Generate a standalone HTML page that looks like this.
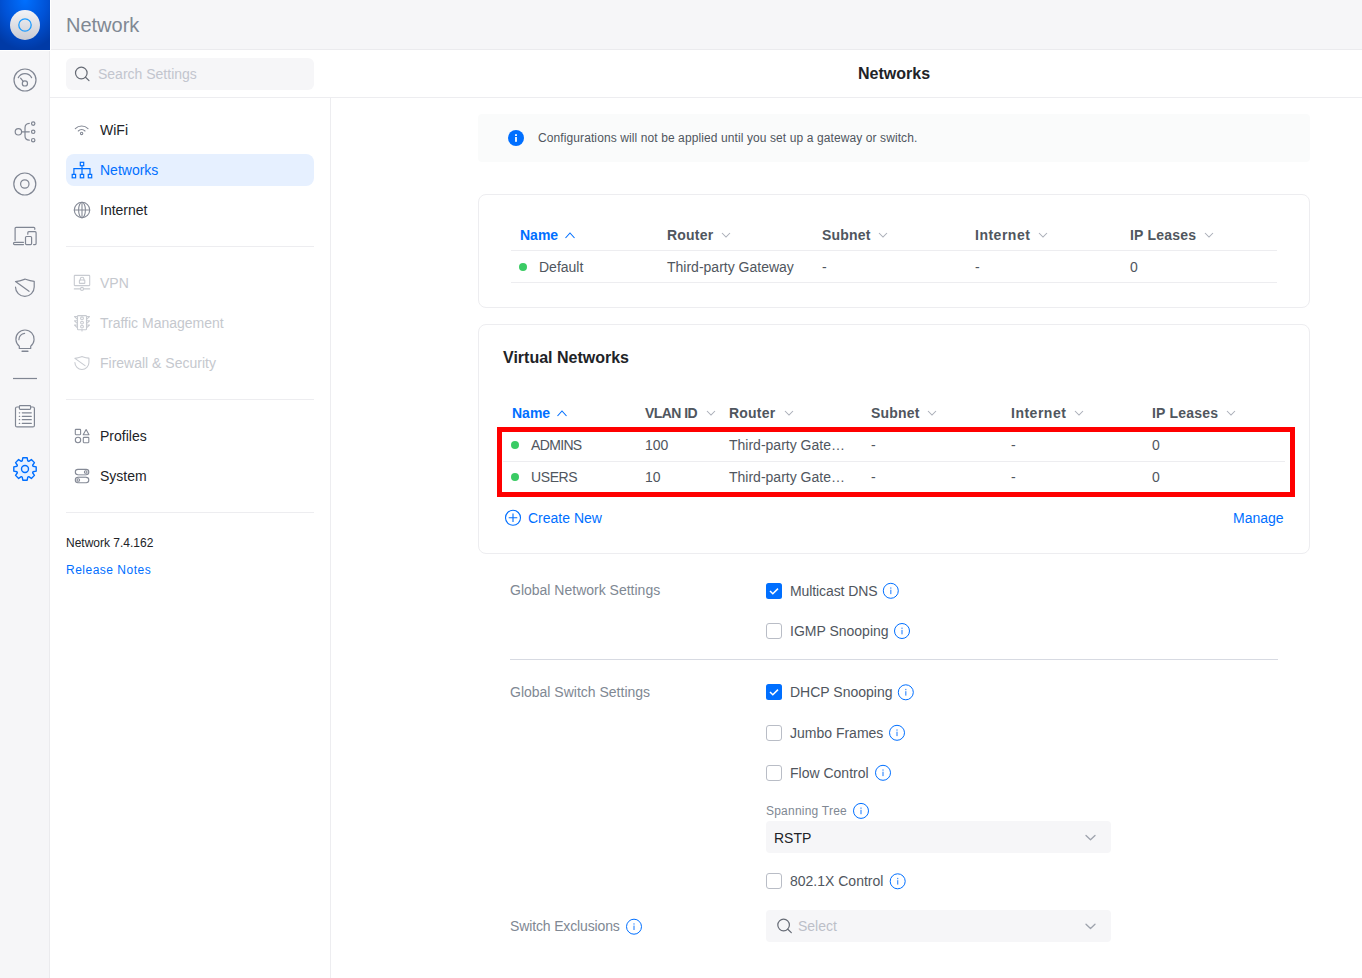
<!DOCTYPE html>
<html><head><meta charset="utf-8">
<style>
*{box-sizing:border-box;margin:0;padding:0}
html,body{width:1362px;height:978px;overflow:hidden;background:#fff;font-family:"Liberation Sans",sans-serif;}
.a{position:absolute;white-space:nowrap}
.t14{font-size:14px;line-height:14px}
.t12{font-size:12px;line-height:12px}
.t16{font-size:16px;line-height:16px}
.b{font-weight:bold}
.c1{color:#212327}.c2{color:#50565e}.c3{color:#808893}.c4{color:#b6b9c4}.cb{color:#006fff}.cd{color:#c5c8ce}
svg{position:absolute;overflow:visible}
</style></head><body>
<!-- icon rail -->
<div class="a" style="left:0;top:51px;width:50px;height:927px;background:#f6f6f8;border-right:1px solid #ebebee"></div>
<div class="a" style="left:0;top:0;width:50px;height:50px;background:radial-gradient(ellipse 80% 100% at 50% 0%,#0070ff 0%,#0052d6 55%,#003aa6 100%)"></div>
<!-- header -->
<div class="a" style="left:51px;top:0;width:1311px;height:50px;background:#f6f6f8;border-bottom:1px solid #ebebee"></div>
<div class="a c3" style="left:66px;top:15px;font-size:20px;line-height:20px">Network</div>
<!-- search -->
<div class="a" style="left:66px;top:58px;width:248px;height:32px;background:#f6f6f8;border-radius:6px"></div>
<div class="a t14" style="left:98px;top:67px;color:#c2c5ce">Search Settings</div>
<!-- subheader line -->
<div class="a" style="left:50px;top:97px;width:1312px;height:1px;background:#ededf0"></div>
<div class="a" style="left:330px;top:98px;width:1px;height:880px;background:#ededf0"></div>
<div class="a t16 b c1" style="left:858px;top:66px">Networks</div>
<!-- sidebar menu -->
<div class="a" style="left:66px;top:154px;width:248px;height:32px;background:#e6f0ff;border-radius:8px"></div>
<div class="a t14 c1" style="left:100px;top:123px">WiFi</div>
<div class="a t14 cb" style="left:100px;top:163px">Networks</div>
<div class="a t14 c1" style="left:100px;top:203px">Internet</div>
<div class="a" style="left:66px;top:246px;width:248px;height:1px;background:#ededf0"></div>
<div class="a t14 cd" style="left:100px;top:276px">VPN</div>
<div class="a t14 cd" style="left:100px;top:316px">Traffic Management</div>
<div class="a t14 cd" style="left:100px;top:356px">Firewall &amp; Security</div>
<div class="a" style="left:66px;top:399px;width:248px;height:1px;background:#ededf0"></div>
<div class="a t14 c1" style="left:100px;top:429px">Profiles</div>
<div class="a t14 c1" style="left:100px;top:469px">System</div>
<div class="a" style="left:66px;top:512px;width:248px;height:1px;background:#ededf0"></div>
<div class="a t12 c1" style="left:66px;top:537px">Network 7.4.162</div>
<div class="a t12 cb" style="left:66px;top:564px;letter-spacing:0.5px">Release Notes</div>

<!-- banner -->
<div class="a" style="left:478px;top:114px;width:832px;height:48px;background:#fafbfb;border-radius:4px"></div>
<div class="a" style="left:508px;top:130px;width:16px;height:16px;border-radius:50%;background:#006fff"></div>
<div class="a t12 c2" style="left:538px;top:132px;letter-spacing:0.1px">Configurations will not be applied until you set up a gateway or switch.</div>

<!-- card 1 -->
<div class="a" style="left:478px;top:194px;width:832px;height:114px;border:1px solid #ededf0;border-radius:8px;background:#fff"></div>
<div class="a" style="left:511px;top:250px;width:766px;height:1px;background:#ededf0"></div>
<div class="a" style="left:511px;top:282px;width:766px;height:1px;background:#ededf0"></div>
<div class="a t14 b cb" style="left:520px;top:228px">Name</div>
<div class="a t14 b c2" style="left:667px;top:228px;letter-spacing:0.2px">Router</div>
<div class="a t14 b c2" style="left:822px;top:228px;letter-spacing:0.2px">Subnet</div>
<div class="a t14 b c2" style="left:975px;top:228px;letter-spacing:0.5px">Internet</div>
<div class="a t14 b c2" style="left:1130px;top:228px;letter-spacing:0.2px">IP Leases</div>
<div class="a" style="left:519px;top:263px;width:8px;height:8px;border-radius:50%;background:#3acb64"></div>
<div class="a t14 c2" style="left:539px;top:260px">Default</div>
<div class="a t14 c2" style="left:667px;top:260px">Third-party Gateway</div>
<div class="a t14 c2" style="left:822px;top:260px">-</div>
<div class="a t14 c2" style="left:975px;top:260px">-</div>
<div class="a t14 c2" style="left:1130px;top:260px">0</div>

<!-- card 2 -->
<div class="a" style="left:478px;top:324px;width:832px;height:230px;border:1px solid #ededf0;border-radius:8px;background:#fff"></div>
<div class="a t16 b c1" style="left:503px;top:350px">Virtual Networks</div>
<div class="a t14 b cb" style="left:512px;top:406px">Name</div>
<div class="a t14 b c2" style="left:645px;top:406px;letter-spacing:-0.55px">VLAN ID</div>
<div class="a t14 b c2" style="left:729px;top:406px;letter-spacing:0.2px">Router</div>
<div class="a t14 b c2" style="left:871px;top:406px;letter-spacing:0.2px">Subnet</div>
<div class="a t14 b c2" style="left:1011px;top:406px;letter-spacing:0.5px">Internet</div>
<div class="a t14 b c2" style="left:1152px;top:406px;letter-spacing:0.2px">IP Leases</div>
<div class="a" style="left:503px;top:461px;width:782px;height:1px;background:#ededf0"></div>
<div class="a" style="left:511px;top:441px;width:8px;height:8px;border-radius:50%;background:#3acb64"></div>
<div class="a" style="left:511px;top:473px;width:8px;height:8px;border-radius:50%;background:#3acb64"></div>
<div class="a t14 c2" style="left:531px;top:438px;letter-spacing:-0.65px">ADMINS</div>
<div class="a t14 c2" style="left:645px;top:438px">100</div>
<div class="a t14 c2" style="left:729px;top:438px">Third-party Gate…</div>
<div class="a t14 c2" style="left:871px;top:438px">-</div>
<div class="a t14 c2" style="left:1011px;top:438px">-</div>
<div class="a t14 c2" style="left:1152px;top:438px">0</div>
<div class="a t14 c2" style="left:531px;top:470px;letter-spacing:-0.4px">USERS</div>
<div class="a t14 c2" style="left:645px;top:470px">10</div>
<div class="a t14 c2" style="left:729px;top:470px">Third-party Gate…</div>
<div class="a t14 c2" style="left:871px;top:470px">-</div>
<div class="a t14 c2" style="left:1011px;top:470px">-</div>
<div class="a t14 c2" style="left:1152px;top:470px">0</div>
<div class="a" style="left:497px;top:427px;width:798px;height:70px;border:5px solid #f00"></div>
<div class="a t14 cb" style="left:528px;top:511px">Create New</div>
<div class="a t14 cb" style="left:1233px;top:511px">Manage</div>

<!-- settings -->
<div class="a t14 c3" style="left:510px;top:583px">Global Network Settings</div>
<div class="a" style="left:510px;top:659px;width:768px;height:1px;background:#d7dae2"></div>
<div class="a t14 c3" style="left:510px;top:685px">Global Switch Settings</div>
<div class="a t14 c3" style="left:510px;top:919px;letter-spacing:-0.14px">Switch Exclusions</div>

<div class="a t14 c2" style="left:790px;top:584px;letter-spacing:-0.09px">Multicast DNS</div>
<div class="a t14 c2" style="left:790px;top:624px">IGMP Snooping</div>
<div class="a t14 c2" style="left:790px;top:685px">DHCP Snooping</div>
<div class="a t14 c2" style="left:790px;top:726px">Jumbo Frames</div>
<div class="a t14 c2" style="left:790px;top:766px">Flow Control</div>
<div class="a t12 c3" style="left:766px;top:805px;letter-spacing:0.22px">Spanning Tree</div>
<div class="a" style="left:766px;top:821px;width:345px;height:32px;background:#f6f6f8;border-radius:4px"></div>
<div class="a t14 c1" style="left:774px;top:831px">RSTP</div>
<div class="a t14 c2" style="left:790px;top:874px">802.1X Control</div>
<div class="a" style="left:766px;top:910px;width:345px;height:32px;background:#f6f6f8;border-radius:4px"></div>
<div class="a t14" style="left:798px;top:919px;color:#bcbfc8">Select</div>

<svg width="1362" height="978" style="left:0;top:0" viewBox="0 0 1362 978">
<defs>
<linearGradient id="lg" x1="0" y1="0" x2="0" y2="1"><stop offset="0" stop-color="#f3f3f6"/><stop offset="1" stop-color="#c9cbd3"/></linearGradient>
</defs>
<!-- logo -->
<circle cx="25" cy="25" r="15" fill="url(#lg)"/>
<circle cx="25" cy="25" r="6.2" fill="none" stroke="#1c9bff" stroke-width="1.3"/>
<g fill="none" stroke="#808693" stroke-width="1.2" stroke-linecap="round" stroke-linejoin="round">
<!-- rail: dashboard -->
<circle cx="25" cy="80" r="11"/>
<path d="M18.3 77.6 A7.6 7.6 0 0 1 31.6 77.6"/>
<circle cx="24.9" cy="83.4" r="2.6"/>
<path d="M20.6 78.2 L23 81.2"/>
<!-- rail: topology -->
<circle cx="18.4" cy="131.8" r="3.2"/>
<path d="M21.6 131.8 H29.3"/>
<path d="M29.3 123.4 Q25 123.6 25 128 V136 Q25 140 29.3 140.2"/>
<circle cx="33.2" cy="123.6" r="1.7"/>
<circle cx="33.2" cy="131.8" r="1.7"/>
<circle cx="33.2" cy="140.2" r="1.7"/>
<!-- rail: devices -->
<circle cx="24.8" cy="184" r="11"/>
<circle cx="24.8" cy="184" r="4.2"/>
<!-- rail: clients -->
<path d="M15.1 240.3 V228.3 Q15.1 227.3 16.1 227.3 H33.8 Q34.8 227.3 34.8 228.3 V229.3"/>
<path d="M23.5 242.3 H14.6 Q13.5 242.3 13.5 243.45 Q13.5 244.6 14.6 244.6 H23.5"/>
<path d="M27.8 234.2 V232.7 Q27.8 231.7 28.8 231.7 H35.1 Q36.1 231.7 36.1 232.7 V243.6 Q36.1 244.6 35.1 244.6 H33.6"/>
<rect x="25.5" y="236.5" width="6.1" height="8.1" rx="1"/>
<!-- rail: shield -->
<path d="M15.5 287 A9.35 9.35 0 0 0 34.2 287 V281.3 C30 281 27.5 280 25 279.1 C22.5 280 20 281 15.5 281.6 L29 291.3"/>
<!-- rail: bulb -->
<path d="M19.3 346.2 A9.1 9.1 0 1 1 30.7 346.2 V348.5 H19.3 Z"/>
<path d="M18.9 339.7 A6.3 6.3 0 0 1 24.6 333.4"/>
<path d="M22.1 351.2 H27.9" stroke-width="1.5"/>
<!-- rail divider -->
<path d="M13 378.5 H37" stroke-linecap="butt"/>
<!-- rail: clipboard -->
<rect x="15.5" y="407" width="18.9" height="19.9" rx="1.5" fill="#fbfbfc"/>
<rect x="19.4" y="405.6" width="11.2" height="3.7" rx="0.8" fill="#fbfbfc"/>
<path d="M19.3 412.8 h0.4 M19.3 416.3 h0.4 M19.3 419.7 h0.4 M19.3 423.4 h0.4"/>
<path d="M22.3 412.8 H31.3 M22.3 416.3 H31.3 M22.3 419.7 H31.3 M22.3 423.4 H31.3"/>
</g>
<!-- rail: gear (active) -->
<path fill="#e6f0ff" stroke="#006fff" stroke-width="1.4" stroke-linejoin="round" d="M22.23 460.96 L22.82 457.81 L27.18 457.81 L27.77 460.96 L28.73 461.36 L31.37 459.55 L34.45 462.63 L32.64 465.27 L33.04 466.23 L36.19 466.82 L36.19 471.18 L33.04 471.77 L32.64 472.73 L34.45 475.37 L31.37 478.45 L28.73 476.64 L27.77 477.04 L27.18 480.19 L22.82 480.19 L22.23 477.04 L21.27 476.64 L18.63 478.45 L15.55 475.37 L17.36 472.73 L16.96 471.77 L13.81 471.18 L13.81 466.82 L16.96 466.23 L17.36 465.27 L15.55 462.63 L18.63 459.55 L21.27 461.36 Z"/>
<circle cx="25" cy="469" r="3.5" fill="none" stroke="#006fff" stroke-width="1.4"/>

<!-- search icon -->
<g fill="none" stroke="#666b75" stroke-width="1.2" stroke-linecap="round">
<circle cx="81.3" cy="73" r="5.8"/>
<path d="M85.5 77.2 L89 80.6"/>
<circle cx="783.6" cy="925" r="5.8"/>
<path d="M787.8 929.2 L791.3 932.6"/>
</g>
<!-- sidebar icons -->
<g fill="none" stroke="#858a96" stroke-width="1.1" stroke-linecap="round" stroke-linejoin="round">
<path d="M75.3 128.6 A9 9 0 0 1 88 128.6"/>
<path d="M78.3 131 A4.8 4.8 0 0 1 85 131"/>
<circle cx="81.6" cy="133.4" r="1.2"/>
<circle cx="82" cy="210" r="7.7"/>
<ellipse cx="82" cy="210" rx="3.4" ry="7.7"/>
<path d="M74.3 210 H89.7 M82 202.3 V217.7"/>
<rect x="75.3" y="429.4" width="5.3" height="5.3" rx="0.6"/>
<path d="M86.1 429.5 L89 434.7 H83.2 Z"/>
<circle cx="78" cy="440" r="2.7"/>
<rect x="83.3" y="437.4" width="5.5" height="5.3" rx="0.6"/>
<rect x="75.3" y="469.4" width="13.5" height="5.3" rx="2.65"/>
<rect x="75.3" y="477.4" width="13.5" height="5.3" rx="2.65"/>
<rect x="78" y="474.7" width="8" height="2.6" fill="#d5d7dc" stroke="none"/>
<circle cx="85.7" cy="472" r="1.3"/>
<circle cx="78.3" cy="480" r="1.3"/>
</g>
<g fill="none" stroke="#006fff" stroke-width="1.2">
<rect x="80.3" y="162.3" width="3.4" height="3.4"/>
<path d="M82 165.7 V168.7 M73.9 174.4 V168.7 H90 V174.4 M82 168.7 V174.4"/>
<rect x="72.2" y="174.4" width="3.4" height="3.4"/>
<rect x="80.3" y="174.4" width="3.4" height="3.4"/>
<rect x="88.3" y="174.4" width="3.4" height="3.4"/>
</g>
<g fill="none" stroke="#c8cbd1" stroke-width="1.1" stroke-linecap="round" stroke-linejoin="round">
<rect x="74.3" y="275.4" width="15.4" height="10.2" rx="0.5"/>
<rect x="79.4" y="280" width="5.4" height="3.4" rx="0.5"/>
<path d="M80.3 280 V279 A1.8 1.8 0 0 1 83.9 279 V280"/>
<path d="M74.3 288.9 H80.5 M83.5 288.9 H89.7"/>
<circle cx="82" cy="288.9" r="1.5"/>
<rect x="77.5" y="315.6" width="9" height="14.2" rx="0.8"/>
<circle cx="82" cy="318.3" r="1.4"/><circle cx="82" cy="322.6" r="1.4"/><circle cx="82" cy="326.6" r="1.4"/>
<path d="M77.5 316.5 H74.5 L77.5 319.3 M77.5 320.8 H74.5 L77.5 323.6 M77.5 325 H74.5 L77.5 327.8"/>
<path d="M86.5 316.5 H89.5 L86.5 319.3 M86.5 320.8 H89.5 L86.5 323.6 M86.5 325 H89.5 L86.5 327.8"/>
<path d="M82 329.8 V331"/>
<path transform="translate(74.9 356.5) scale(0.75) translate(-15.5 -279.1)" stroke-width="1.45" d="M15.5 287 A9.35 9.35 0 0 0 34.2 287 V281.3 C30 281 27.5 280 25 279.1 C22.5 280 20 281 15.5 281.6 L29 291.3"/>
</g>
<!-- banner info -->
<rect x="515.1" y="134.2" width="1.8" height="1.8" fill="#fff"/>
<rect x="515.1" y="137" width="1.8" height="4.8" fill="#fff"/>

<!-- table chevrons -->
<g fill="none" stroke-width="1.1">
<path d="M565.5 238 L570 233 L574.5 238" stroke="#006fff"/>
<path d="M557.5 416 L562 411 L566.5 416" stroke="#006fff"/>
</g>
<g fill="none" stroke="#a9adb7" stroke-width="1.05">
<path d="M722 233 L726 237 L730 233"/>
<path d="M879 233 L883 237 L887 233"/>
<path d="M1039 233 L1043 237 L1047 233"/>
<path d="M1205 233 L1209 237 L1213 233"/>
<path d="M707 411 L711 415 L715 411"/>
<path d="M785 411 L789 415 L793 411"/>
<path d="M928 411 L932 415 L936 411"/>
<path d="M1075 411 L1079 415 L1083 411"/>
<path d="M1227 411 L1231 415 L1235 411"/>
</g>
<!-- create new -->
<g fill="none" stroke="#006fff" stroke-width="1.1">
<circle cx="513" cy="517.8" r="7.5"/>
<path d="M513 513.5 V522.1 M508.7 517.8 H517.3"/>
</g>
<!-- select chevrons -->
<g fill="none" stroke="#9ea3ad" stroke-width="1.3" stroke-linecap="round" stroke-linejoin="round">
<path d="M1086 835.5 L1090.5 839.8 L1095 835.5"/>
<path d="M1086 924.2 L1090.5 928.5 L1095 924.2"/>
</g>
<!-- checkboxes -->
<rect x="766" y="583" width="16" height="16" rx="2.5" fill="#006fff"/>
<rect x="766" y="684" width="16" height="16" rx="2.5" fill="#006fff"/>
<path d="M770 591 L772.8 593.8 L778 588.6" fill="none" stroke="#fff" stroke-width="1.5"/>
<path d="M770 692 L772.8 694.8 L778 689.6" fill="none" stroke="#fff" stroke-width="1.5"/>
<g fill="#fff" stroke="#b9bdc6" stroke-width="1">
<rect x="766.5" y="623.5" width="15" height="15" rx="2.5"/>
<rect x="766.5" y="725.5" width="15" height="15" rx="2.5"/>
<rect x="766.5" y="765.5" width="15" height="15" rx="2.5"/>
<rect x="766.5" y="873.5" width="15" height="15" rx="2.5"/>
</g>
<!-- info icons -->
<g fill="none" stroke="#006fff" stroke-width="1">
<circle cx="890.8" cy="590.8" r="7.5"/>
<circle cx="902" cy="631" r="7.5"/>
<circle cx="905.8" cy="692.3" r="7.5"/>
<circle cx="897" cy="732.8" r="7.5"/>
<circle cx="883" cy="772.8" r="7.5"/>
<circle cx="861" cy="810.9" r="7.5"/>
<circle cx="897.7" cy="881.3" r="7.5"/>
<circle cx="634" cy="926.7" r="7.5"/>
</g>
<g fill="#3d8fff"><rect x="890.20" y="587.40" width="1.2" height="1.3"/><rect x="890.20" y="589.70" width="1.2" height="4.4"/><rect x="901.40" y="627.60" width="1.2" height="1.3"/><rect x="901.40" y="629.90" width="1.2" height="4.4"/><rect x="905.20" y="688.90" width="1.2" height="1.3"/><rect x="905.20" y="691.20" width="1.2" height="4.4"/><rect x="896.40" y="729.40" width="1.2" height="1.3"/><rect x="896.40" y="731.70" width="1.2" height="4.4"/><rect x="882.40" y="769.40" width="1.2" height="1.3"/><rect x="882.40" y="771.70" width="1.2" height="4.4"/><rect x="860.40" y="807.50" width="1.2" height="1.3"/><rect x="860.40" y="809.80" width="1.2" height="4.4"/><rect x="897.10" y="877.90" width="1.2" height="1.3"/><rect x="897.10" y="880.20" width="1.2" height="4.4"/><rect x="633.40" y="923.30" width="1.2" height="1.3"/><rect x="633.40" y="925.60" width="1.2" height="4.4"/></g>
</svg>
</body></html>
